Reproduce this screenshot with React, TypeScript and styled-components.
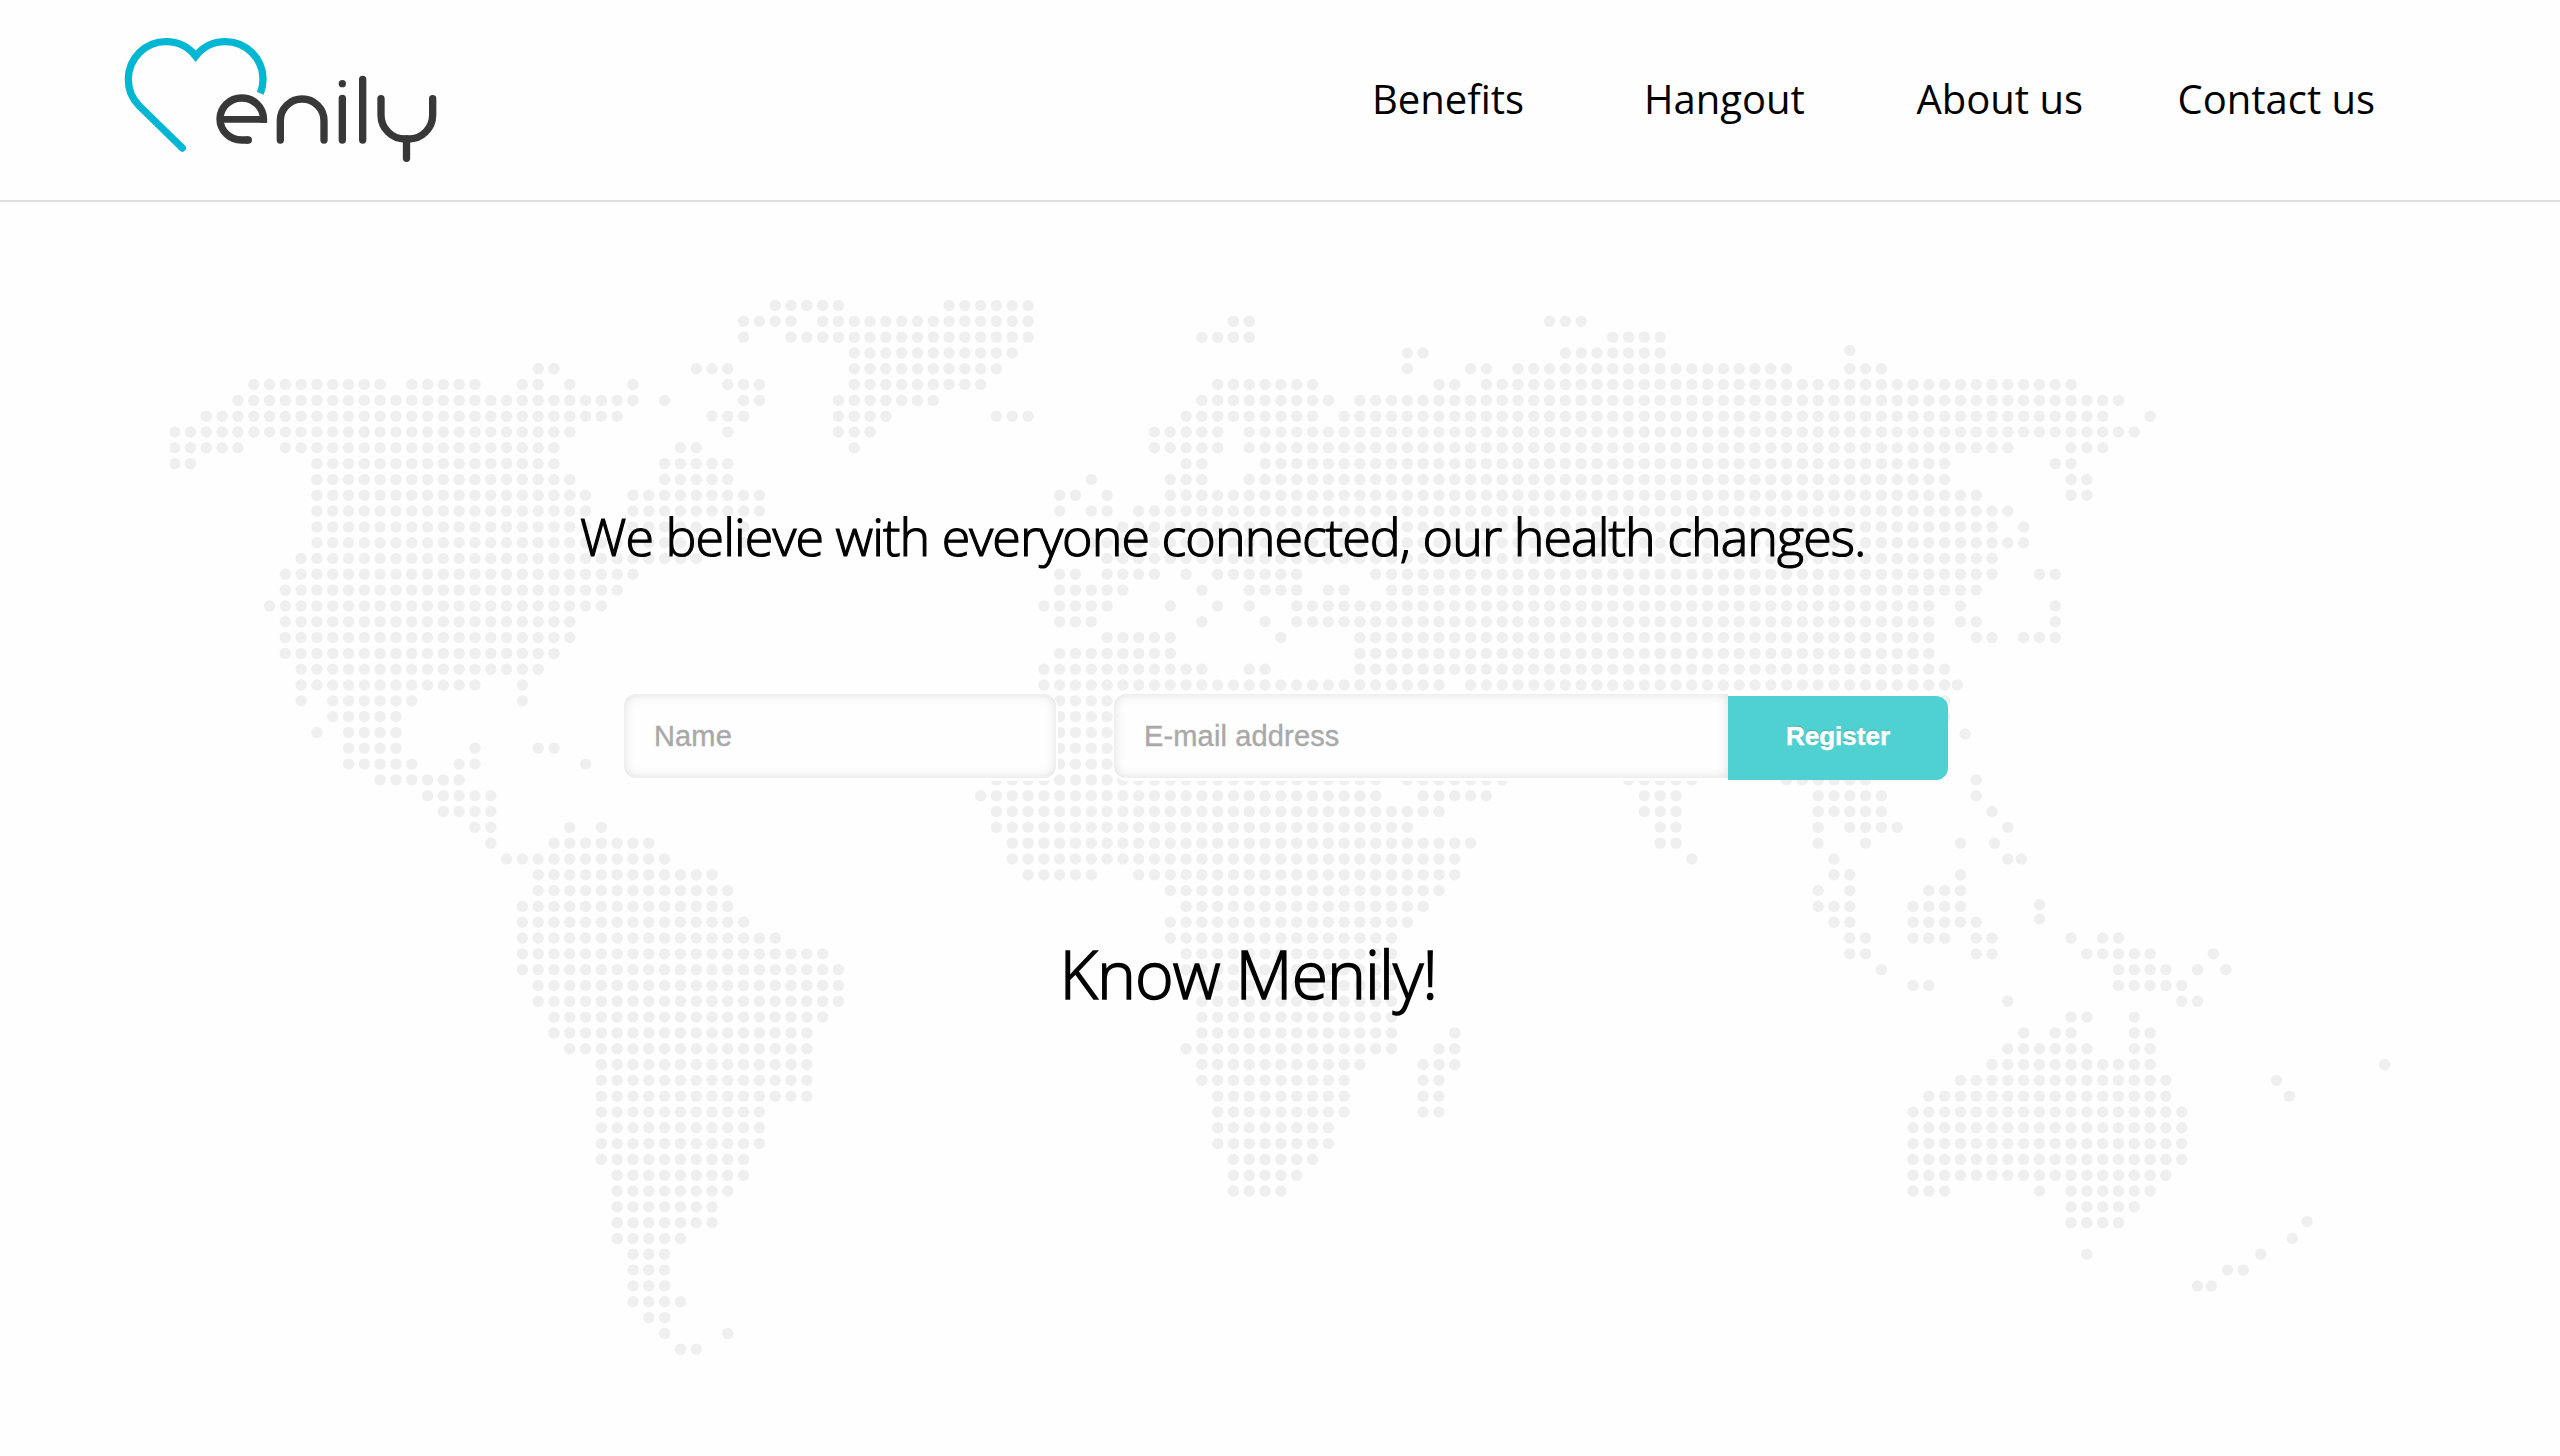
import React from "react";
import styled, { createGlobalStyle } from "styled-components";

const GlobalStyle = createGlobalStyle`
  * { box-sizing: border-box; }
  body {
    margin: 0;
    background: #fefefe;
    color: #000;
    font-family: "Open Sans", sans-serif;
  }
`;

/* Dotted world map: one string per row, each listing the runs of filled columns. */
const MAP_ROWS: string[] = [
  "38-42 49-54",
  "36-39 41-54 67-68 87-89",
  "36 39-54 65-68 91-94",
  "43-53 78-79 88-94",
  "23-24 33-35 43-52 78 82-83 85-102 106-108",
  "5-13 15-19 22-23 25 29 35-37 43-51 66-72 80-81 83-120",
  "4-29 31 36-37 42-48 65-73 75-123",
  "2-28 34-36 42-45 52-54 64-72 74-122 125",
  "0-25 35 42-44 62-66 68-124",
  "0-4 7-24 32-33 43 62-66 68-116 120-122",
  "0-1 9-24 31-35 64-65 69-112 119-120",
  "9-25 31-35 58 63-65 68-112 120-121",
  "9-26 29-37 56-57 59 63-114 120-121",
  "9-26 29-37 56 58-59 61-116",
  "9-26 29-33 36 60-115 117",
  "9-33 36 58-117",
  "8-33 59-115",
  "7-29 56-57 59-62 64 66-71 76-115 118-119",
  "7-28 56-60 65 68-71 73-74 77-114",
  "6-27 55-59 63 66 68 71-111 113 119",
  "7-25 56-58 65 69 71-111 113-114 119",
  "7-25 59-63 70 75-111 114-115 117-119",
  "7-24 56-63 75-111",
  "8-23 55-65 68-69 75-112",
  "8-19 22 55-80 82-112",
  "8 10-15 22 56-59 112",
  "10-14 56-59 112",
  "9 11-14 56-59",
  "11-14 19 23-24 56-59",
  "11-15 18-19 26 56-59",
  "13-18 52-76 78-84 92-96 102-107 114",
  "16-20 51-76 79-83 93-95 104-108 114",
  "17-20 52-80 93-95 104-108 115",
  "19-20 25 27 52-78 94-95 104 106-109 116",
  "20 24-30 53-82 94-95 104 107 113",
  "21-31 53-81 96 105",
  "23-34 54-58 61-81 105-106 113",
  "23-35 63-80 104 106 111-113",
  "22-35 64-79 104-106 110-113",
  "22-36 63-78 105-106 110-114",
  "22-38 63-77 106-107 110-112 114-115 120 122-123",
  "22-41 64-77 106-107 114-115 121-125 129",
  "22-42 64-77 108 123-126 128",
  "23-42 65-77 110-111 123-127",
  "23-42 65-77 116 127-128",
  "24-41 65-77 120-121 124",
  "24-40 65-77 81 117 119-120 124-125",
  "25-40 64-77 80-81 116-121 124-125",
  "27-40 65-75 79-81 115-125",
  "27-40 65-74 79-80 113-126 133",
  "27-40 66-74 79-80 111-126",
  "27-37 66-74 79-80 110-127",
  "27-37 66-73 110-127",
  "27-37 66-73 110-127",
  "27-36 67-72 110-127",
  "28-36 67-71 110-126",
  "28-35 67-70 110-112 118 120-125",
  "28-34 120-124",
  "28-34 120-123",
  "28-32 134",
  "29-31 121 132",
  "29-31",
  "29-31 128",
  "29-32",
  "30-31",
  "31 35",
  "32-33",
];

/* Small islands that fall between the grid columns or rows. */
const MAP_STRAYS: [number, number][] = [
  [106, 2.84], [112.8, 24], [113.3, 27.1], [115.15, 34], [116, 35], [116.85, 35],
  [118, 37.9], [118, 38.8], [129.8, 42], [139.84, 48], [133.82, 50],
  [134.93, 57.93], [129.9, 61], [130.9, 61], [128.88, 62],
];

const PITCH_X = 15.803;
const PITCH_Y = 15.813;

const dots: [number, number][] = [
  ...MAP_ROWS.flatMap((row, r) =>
    row.split(" ").flatMap((run) => {
      const [from, to = from] = run.split("-").map(Number);
      return Array.from({ length: to - from + 1 }, (_, i): [number, number] => [from + i, r]);
    })
  ),
  ...MAP_STRAYS,
];

const Page = styled.div`
  display: flex;
  flex-direction: column;
  width: 2560px;
  height: 1456px;
  overflow: hidden;
`;

const Header = styled.header`
  display: flex;
  align-items: flex-start;
  justify-content: space-between;
  height: 202px;
  padding: 20px 0 0 110px;
  border-bottom: 2px solid #dedede;
`;

const Logo = styled.svg`
  display: block;
  width: 350px;
  height: 180px;
`;

const Nav = styled.nav`
  display: grid;
  grid-template-columns: 272px 272.5px 261px 382.5px;
  padding-top: 49px;
`;

const NavLink = styled.a`
  font-size: 40px;
  line-height: 60px;
  color: #000;
  text-decoration: none;
  white-space: nowrap;
`;

const Hero = styled.main`
  display: grid;
  flex: 1;
  grid-template: 1fr / 1fr;
`;

const WorldMap = styled.svg`
  grid-area: 1 / 1;
  width: 2224px;
  height: 1060px;
  margin: 97px 0 0 170px;
`;

const Content = styled.div`
  grid-area: 1 / 1;
  display: flex;
  flex-direction: column;
  align-items: flex-start;
  padding-top: 304px;
`;

const Headline = styled.h1`
  margin: 0 0 0 580px;
  font-size: 52px;
  font-weight: 300;
  line-height: 60px;
  letter-spacing: -0.95px;
  -webkit-text-stroke: 1.2px #000;
  white-space: nowrap;
`;

const SignUp = styled.form`
  display: flex;
  align-items: flex-start;
  height: 86px;
  margin: 128px 0 0 624px;
`;

const Field = styled.input<{ $width: number; $joined?: boolean }>`
  width: ${(p) => p.$width}px;
  height: 84px;
  margin: 0 ${(p) => (p.$joined ? 0 : 58)}px 0 0;
  padding: 0 29px 0 30px;
  border: 0;
  border-radius: ${(p) => (p.$joined ? "12px 0 0 12px" : "12px")};
  outline: 0;
  background: #fefefe;
  box-shadow: inset 0 0 12px rgba(0, 0, 0, 0.13), 1px 2px 0 1px #fff;
  font: 29px "Liberation Sans", Arial, sans-serif;
  letter-spacing: 0.15px;

  &::placeholder {
    color: #a9a9a9;
    opacity: 1;
    -webkit-text-stroke: 0.4px #a9a9a9;
  }
`;

const Submit = styled.button`
  width: 220px;
  height: 84px;
  margin-top: 2px;
  padding: 0 0 3px;
  border: 0;
  border-radius: 0 12px 12px 0;
  background: #4fd1d1;
  color: #fff;
  font: bold 26px "Liberation Sans", Arial, sans-serif;
  text-shadow: 0 -1px 1px rgba(0, 0, 0, 0.25);
  -webkit-text-stroke: 0.5px #fff;
`;

const Tagline = styled.h2`
  margin: 153px 0 0 1059.5px;
  font-size: 66px;
  font-weight: 300;
  line-height: 80px;
  letter-spacing: -0.95px;
  -webkit-text-stroke: 1.5px #000;
  white-space: nowrap;
`;

function MenilyLogo() {
  return (
    <Logo viewBox="0 0 1050 540" fill="none" strokeWidth="22" role="img" aria-label="Menily">
      <g stroke="#00b7d3">
        <path
          d="M217 384 L88 258 A113 113 0 0 1 55 178 A113 113 0 0 1 168 65 A113 113 0 0 1 257 108.4 A113 113 0 0 1 346 65 A113 113 0 0 1 459 178 A113 113 0 0 1 451 220"
          strokeMiterlimit="10"
        />
        <path d="M217 384 L216 383" strokeLinecap="round" />
      </g>
      <g stroke="#383838">
        <path d="M415 360 H395 A65 63 0 0 1 330 297 A65 63 0 0 1 395 234 A65.5 63 0 0 1 460.5 297 V308" />
        <path d="M330 298 H471" strokeWidth="20" />
        <g strokeLinecap="round">
          <path d="M415 360 H414" />
          <path d="M511 360 V302 A65.5 65 0 0 1 642 302 V360" />
          <path d="M697 235 V360 M758 178 V360" />
          <path d="M813 236 V285 A72 72 0 0 0 885 357 H896 A72 72 0 0 0 968 285 V236" />
          <path d="M889.5 357 V415" />
        </g>
      </g>
      <circle cx="697" cy="191" r="11" fill="#383838" />
    </Logo>
  );
}

export default function App() {
  return (
    <Page>
      <GlobalStyle />
      <Header>
        <MenilyLogo />
        <Nav>
          <NavLink>Benefits</NavLink>
          <NavLink>Hangout</NavLink>
          <NavLink>About us</NavLink>
          <NavLink>Contact us</NavLink>
        </Nav>
      </Header>
      <Hero>
        <WorldMap viewBox="0 0 2224 1060" fill="#efefef" aria-hidden="true">
          {dots.map(([c, r]) => (
            <circle key={`${c}:${r}`} cx={4.7 + c * PITCH_X} cy={6.5 + r * PITCH_Y} r="5.7" />
          ))}
        </WorldMap>
        <Content>
          <Headline>We believe with everyone connected, our health changes.</Headline>
          <SignUp>
            <Field $width={432} type="text" placeholder="Name" />
            <Field $width={614} $joined type="email" placeholder="E-mail address" />
            <Submit type="button">Register</Submit>
          </SignUp>
          <Tagline>Know Menily!</Tagline>
        </Content>
      </Hero>
    </Page>
  );
}
